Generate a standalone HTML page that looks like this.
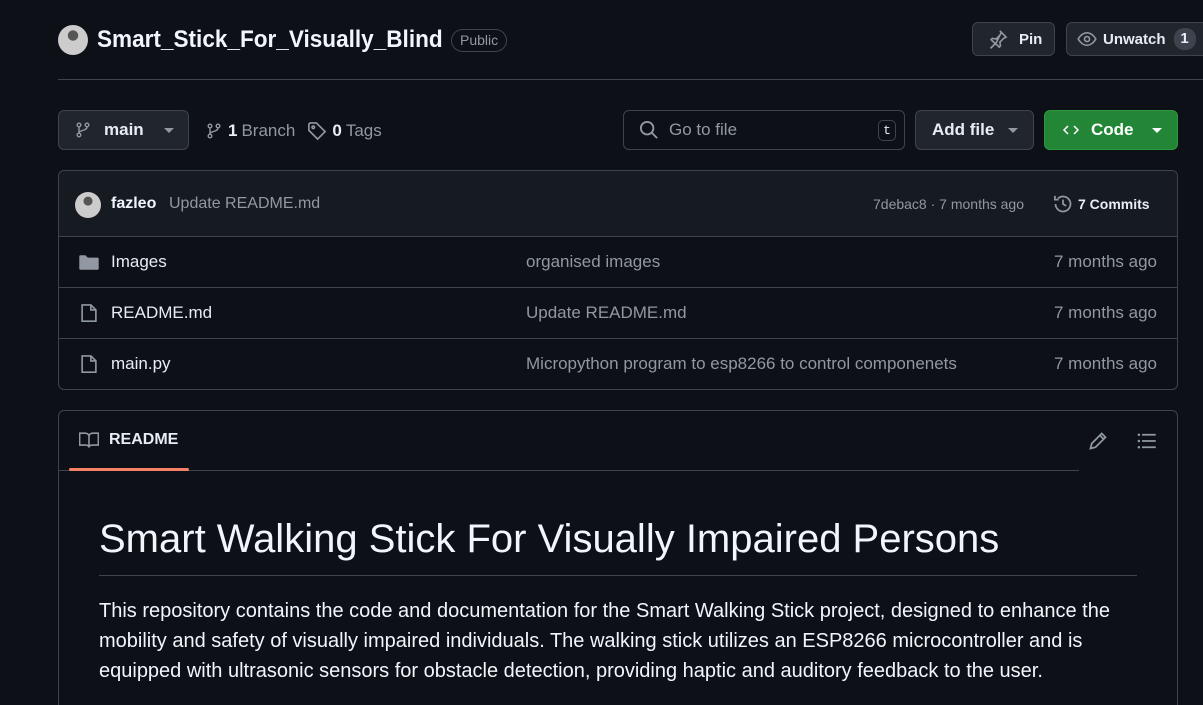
<!DOCTYPE html>
<html style="height:705px;overflow:hidden"><head><meta charset="utf-8"><style>
*{box-sizing:border-box;margin:0;padding:0}
body{width:1203px;height:705px;overflow:hidden;background:#0d1117;color:#e6edf3;font-family:"Liberation Sans",sans-serif;position:relative}
.a{position:absolute}
.btn{position:absolute;background:#21262d;border:1px solid #3d444d;border-radius:6px;color:#e6edf3;font-weight:bold;display:flex;align-items:center}
.muted{color:#9198a1}
.row{position:absolute;left:58px;width:1120px;height:51px;border-top:1px solid #3d444d;font-size:17px}
.row span{position:absolute;top:15px}
svg{display:block}
</style></head><body>
<div class="a" style="left:58px;top:25px;width:30px;height:30px;border-radius:50%;background:radial-gradient(circle at 50% 35%,#555 0 20%,#ccc 22% 100%)"></div>
<div class="a" style="left:97px;top:26px;font-size:24px;font-weight:bold;color:#f0f6fc;transform:scaleX(0.94);transform-origin:left;white-space:nowrap">Smart_Stick_For_Visually_Blind</div>
<div class="a" style="left:451px;top:29px;height:23px;padding:0 8px;border:1px solid #3d444d;border-radius:12px;font-size:14px;line-height:21px;color:#9198a1">Public</div>
<div class="btn" style="left:972px;top:22px;width:83px;height:34px;font-size:15px;padding-left:14px"><svg width="22" height="20" viewBox="0 0 16 16" fill="none" stroke="#9198a1" stroke-width="1.3"><path d="M9.5 1.5l5 5-2 1-3 3 .5 3-1 1-3-3-4 4M6 12L2.5 8.5l1-1 3 .5 3-3 1-2z"/></svg><span style="margin-left:10px">Pin</span></div>
<div class="btn" style="left:1066px;top:22px;width:150px;height:34px;font-size:15px;padding-left:10px"><svg width="20" height="20" viewBox="0 0 16 16" fill="none" stroke="#9198a1" stroke-width="1.3"><path d="M1 8s2.5-5 7-5 7 5 7 5-2.5 5-7 5-7-5-7-5z"/><circle cx="8" cy="8" r="2"/></svg><span style="margin-left:6px">Unwatch</span><span style="margin-left:8px;background:#3d444d;border-radius:10px;width:22px;height:22px;text-align:center;line-height:22px">1</span></div>
<div class="a" style="left:58px;top:79px;width:1145px;height:1px;background:#3d444d"></div>

<div class="btn" style="left:58px;top:110px;width:131px;height:40px;font-size:17px;padding-left:16px"><svg width="16" height="18" viewBox="0 0 16 16" fill="none" stroke="#9198a1" stroke-width="1.4"><circle cx="4" cy="3" r="1.8"/><circle cx="4" cy="13" r="1.8"/><circle cx="12" cy="3" r="1.8"/><path d="M4 5v6M12 5c0 4-8 3-8 6"/></svg><span style="margin-left:13px">main</span><span style="margin-left:20px;border:5px solid transparent;border-top-color:#9198a1;margin-top:5px"></span></div>
<div class="a" style="left:206px;top:121px;display:flex;align-items:center;font-size:17px"><svg width="16" height="18" viewBox="0 0 16 16" fill="none" stroke="#9198a1" stroke-width="1.4"><circle cx="4" cy="3" r="1.8"/><circle cx="4" cy="13" r="1.8"/><circle cx="12" cy="3" r="1.8"/><path d="M4 5v6M12 5c0 4-8 3-8 6"/></svg><b style="margin-left:6px">1</b><span class="muted" style="margin-left:4px">Branch</span>
<svg style="margin-left:12px" width="20" height="20" viewBox="0 0 16 16" fill="none" stroke="#9198a1" stroke-width="1.3"><path d="M1.5 2.5v5l7 7 6-6-7-7h-5z"/><circle cx="5" cy="5" r="1"/></svg><b style="margin-left:5px">0</b><span class="muted" style="margin-left:4px">Tags</span></div>

<div class="a" style="left:623px;top:110px;width:282px;height:40px;border:1px solid #3d444d;border-radius:6px;display:flex;align-items:center;padding-left:15px;font-size:17px;color:#9198a1"><svg width="20" height="20" viewBox="0 0 16 16" fill="none" stroke="#9198a1" stroke-width="1.5"><circle cx="6.5" cy="6.5" r="5"/><path d="M10 10l4.5 4.5"/></svg><span style="margin-left:10px">Go to file</span><span style="position:absolute;right:8px;top:9px;width:18px;height:21px;border:1px solid #3d444d;border-radius:5px;font-family:'Liberation Mono',monospace;font-size:13px;color:#e6edf3;text-align:center;line-height:19px">t</span></div>
<div class="btn" style="left:915px;top:110px;width:119px;height:40px;font-size:17px;padding-left:16px">Add file<span style="margin-left:14px;border:5px solid transparent;border-top-color:#9198a1;margin-top:5px"></span></div>
<div class="btn" style="left:1044px;top:110px;width:134px;height:40px;font-size:17px;padding-left:16px;background:#238636;border-color:#2e9a40;color:#fff"><svg width="20" height="16" viewBox="0 0 16 16" fill="none" stroke="#fff" stroke-width="1.5"><path d="M5 4L1 8l4 4M11 4l4 4-4 4"/></svg><span style="margin-left:10px">Code</span><span style="margin-left:18px;border:5px solid transparent;border-top-color:#fff;margin-top:5px"></span></div>

<div class="a" style="left:58px;top:170px;width:1120px;height:220px;border:1px solid #3d444d;border-radius:6px;overflow:hidden">
<div style="height:66px;background:#161b22;position:relative;font-size:16px">
<div class="a" style="left:16px;top:21px;width:26px;height:26px;border-radius:50%;background:radial-gradient(circle at 50% 35%,#555 0 20%,#ccc 22% 100%)"></div>
<b class="a" style="left:52px;top:24px;color:#f0f6fc">fazleo</b><span class="a muted" style="left:110px;top:24px">Update README.md</span>
<span class="a muted" style="left:814px;top:25px;font-size:14px">7debac8 · 7 months ago</span>
<div class="a" style="left:994px;top:23px;display:flex;align-items:center;font-size:14px"><svg width="20" height="20" viewBox="0 0 16 16" fill="none" stroke="#9198a1" stroke-width="1.4"><path d="M2 8a6 6 0 1 0 2-4.5M1.5 1.5v3h3M8 4.5V8l2.5 1.5"/></svg><b style="margin-left:5px">7 Commits</b></div>
</div></div>
<div class="row" style="top:236px"><svg class="a" style="left:21px;top:17px" width="20" height="17" viewBox="0 0 16 14"><path d="M0 2a1 1 0 0 1 1-1h4l2 2h8a1 1 0 0 1 1 1v8a1 1 0 0 1-1 1H1a1 1 0 0 1-1-1z" fill="#9198a1"/></svg><span style="left:53px">Images</span><span class="muted" style="left:468px">organised images</span><span class="muted" style="right:21px">7 months ago</span></div>
<div class="row" style="top:287px"><svg class="a" style="left:22px;top:15px" width="18" height="20" viewBox="0 0 14 16" fill="none" stroke="#9198a1" stroke-width="1.3"><path d="M1.5 1.5h7l4 4v9h-11zM8.5 1.5v4h4"/></svg><span style="left:53px">README.md</span><span class="muted" style="left:468px">Update README.md</span><span class="muted" style="right:21px">7 months ago</span></div>
<div class="row" style="top:338px"><svg class="a" style="left:22px;top:15px" width="18" height="20" viewBox="0 0 14 16" fill="none" stroke="#9198a1" stroke-width="1.3"><path d="M1.5 1.5h7l4 4v9h-11zM8.5 1.5v4h4"/></svg><span style="left:53px">main.py</span><span class="muted" style="left:468px">Micropython program to esp8266 to control componenets</span><span class="muted" style="right:21px">7 months ago</span></div>

<div class="a" style="left:58px;top:410px;width:1120px;height:300px;border:1px solid #3d444d;border-bottom:none;border-radius:6px 6px 0 0">
<div class="a" style="left:0;top:59px;width:1020px;height:1px;background:#3d444d"></div>
<div class="a" style="left:10px;top:57px;width:120px;height:3px;background:#f78166;border-radius:2px"></div>
<div class="a" style="left:20px;top:20px;display:flex;align-items:center;font-size:16px;font-weight:bold"><svg width="20" height="18" viewBox="0 0 16 14" fill="none" stroke="#9198a1" stroke-width="1.3"><path d="M.5 1.5h4.5c1.5 0 3 1 3 2.5v9c0-1-1-2-2.5-2H.5zM15.5 1.5H11c-1.5 0-3 1-3 2.5v9c0-1 1-2 2.5-2h5z"/></svg><span style="margin-left:10px">README</span></div>
<svg class="a" style="left:1029px;top:20px" width="20" height="20" viewBox="0 0 16 16" fill="none" stroke="#9198a1" stroke-width="1.4"><path d="M2 14l1-4 8-8 3 3-8 8zM9.5 3.5l3 3"/></svg>
<svg class="a" style="left:1078px;top:21px" width="20" height="18" viewBox="0 0 16 14" fill="#9198a1"><circle cx="1.5" cy="2" r="1"/><circle cx="1.5" cy="7" r="1"/><circle cx="1.5" cy="12" r="1"/><rect x="4" y="1.3" width="11" height="1.4"/><rect x="4" y="6.3" width="11" height="1.4"/><rect x="4" y="11.3" width="11" height="1.4"/></svg>
<div class="a" style="left:40px;top:106px;font-size:40px;color:#f0f6fc;white-space:nowrap">Smart Walking Stick For Visually Impaired Persons</div>
<div class="a" style="left:40px;top:164px;width:1038px;height:1px;background:#3d444d"></div>
<div class="a" style="left:40px;top:185px;width:1030px;font-size:20px;line-height:30px;color:#f0f6fc">This repository contains the code and documentation for the Smart Walking Stick project, designed to enhance the mobility and safety of visually impaired individuals. The walking stick utilizes an ESP8266 microcontroller and is equipped with ultrasonic sensors for obstacle detection, providing haptic and auditory feedback to the user.</div>
</div>
</body></html>
